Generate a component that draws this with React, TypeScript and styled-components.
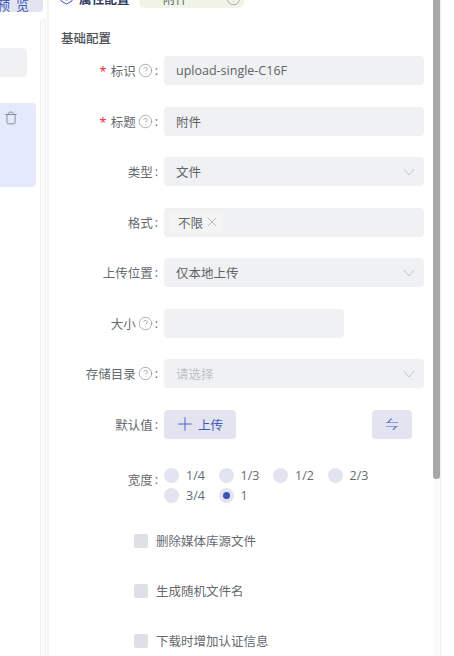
import React from "react";
import styled, { createGlobalStyle } from "styled-components";
import { CircleHelp, Plus, Trash, X } from "lucide-react";

const Global = createGlobalStyle`
  html, body { margin: 0; padding: 0; background: #fff; }
  body { font-family: "Open Sans", "Noto Sans CJK SC", sans-serif; font-size: 12.5px; color: #606266; }
`;

const Page = styled.div`
  position: relative;
  display: flex;
  width: 454px;
  height: 656px;
  overflow: hidden;
  background: #fff;
`;

const LeftPanel = styled.aside`
  position: relative;
  flex: 0 0 47px;
  display: flex;
  flex-direction: column;
  align-items: flex-start;
  border-right: 2px solid #f3f3f4;
  box-sizing: content-box;
`;

const PreviewButton = styled.div`
  width: 43px;
  height: 12px;
  background: #e2e5ef;
  border-radius: 0 0 4px 0;
  color: #4457bd;
  font-size: 13px;
  line-height: 10px;
  overflow: hidden;
  display: flex;
  justify-content: flex-end;
  padding: 0 8px 2px 0;
  box-sizing: border-box;
  align-items: flex-end;
  letter-spacing: 6px;
  white-space: nowrap;
`;

const LeftInput = styled.div`
  width: 27px;
  height: 29px;
  margin-top: 36px;
  background: #f0f1f3;
  border-radius: 0 4px 4px 0;
`;

const LeftCard = styled.div`
  width: 36px;
  height: 84px;
  margin-top: 26px;
  background: #e4e9fb;
  border-radius: 0 4px 4px 0;
  display: flex;
  justify-content: flex-end;
  padding: 8px 18px 0 0;
  box-sizing: border-box;
  color: #70747c;
`;

const LeftTrack = styled.div`
  position: absolute;
  left: 40px;
  top: 19px;
  bottom: 0;
  width: 6px;
  background: #fbfbfb;
  border: 1px solid #f3f3f4;
  border-bottom: none;
  border-radius: 4px 4px 0 0;
  box-sizing: border-box;
`;

const RightPanel = styled.main`
  flex: 0 0 372px;
  padding-left: 11px;
  box-sizing: border-box;
`;

const Header = styled.header`
  display: flex;
  align-items: center;
  height: 20px;
  margin-top: -12px;
`;

const HeaderTitle = styled.span`
  margin-left: 6px;
  font-size: 12.5px;
  font-weight: 700;
  color: #2f3a5f;
  letter-spacing: 0.2px;
`;

const TypeTag = styled.div`
  margin-left: 9px;
  width: 105px;
  height: 20px;
  background: #eef5e6;
  border-radius: 6px;
  display: flex;
  align-items: center;
  justify-content: space-between;
  padding: 0 3px 0 24px;
  box-sizing: border-box;
  color: #606266;
`;

const SectionTitle = styled.h2`
  margin: 23px 0 9px 1px;
  font-size: 12.5px;
  line-height: 16px;
  font-weight: 500;
  color: #4f5258;
`;

const Row = styled.div`
  display: grid;
  grid-template-columns: 98px 260px;
  column-gap: 6px;
  align-items: center;
  min-height: 29px;
  margin-bottom: 21.5px;
`;

const Label = styled.label`
  display: flex;
  align-items: center;
  justify-content: flex-end;
  gap: 2px;
  color: #666a70;
  white-space: nowrap;
`;

const Required = styled.span`
  color: #f5222d;
  margin-right: 1px;
`;

const HelpIcon = styled(CircleHelp)`
  color: #8a8d93;
`;

const Field = styled.div<{ $width?: number }>`
  width: ${(p) => p.$width ?? 260}px;
  height: 29px;
  background: #f0f1f3;
  border-radius: 4px;
  display: flex;
  align-items: center;
  justify-content: space-between;
  padding: 0 12px;
  box-sizing: border-box;
  color: #606266;
`;

const Placeholder = styled.span`
  color: #bfc2c7;
`;

const ChevronSvg = styled.svg`
  margin-right: -3px;
  stroke: #c0c4cc;
  fill: none;
`;

const Chevron = () => (
  <ChevronSvg width="12" height="8" viewBox="0 0 12 8" strokeWidth="1">
    <path d="M0.8 1 L6 7 L11.2 1" />
  </ChevronSvg>
);

const Chip = styled.span`
  height: 19px;
  margin-left: -6px;
  padding: 0 2px 0 8px;
  display: inline-flex;
  align-items: center;
  gap: 1px;
  border-radius: 3px;
  background: #f4f4f5;
`;

const ChipClose = styled(X)`
  color: #909399;
`;

const Actions = styled.div`
  display: flex;
  justify-content: space-between;
  width: 248px;
`;

const UploadButton = styled.button`
  width: 72px;
  height: 29px;
  border: none;
  border-radius: 4px;
  background: #e2e5ef;
  color: #4457bd;
  font: inherit;
  display: flex;
  align-items: center;
  justify-content: center;
  gap: 2px;
  padding: 0 3px 0 0;
`;

const SwapButton = styled(UploadButton)`
  width: 40px;
  padding: 0;
`;

const WidthRow = styled(Row)`
  align-items: start;
  margin-top: 28px;
  margin-bottom: 27px;
`;

const WidthLabel = styled(Label)`
  margin-top: 3px;
`;

const RadioGroup = styled.div`
  display: flex;
  flex-wrap: wrap;
  width: 230px;
  row-gap: 3px;
`;

const RadioItem = styled.span`
  flex: 0 0 54.5px;
  height: 17px;
  display: flex;
  align-items: center;
  gap: 7px;
  color: #666a70;
`;

const RadioDot = styled.span<{ $checked?: boolean }>`
  width: 15px;
  height: 15px;
  border-radius: 50%;
  background: #e2e5ef;
  display: flex;
  align-items: center;
  justify-content: center;
  flex: none;
  &::after {
    content: "";
    display: ${(p) => (p.$checked ? "block" : "none")};
    width: 7px;
    height: 7px;
    border-radius: 50%;
    background: #3f51b5;
  }
`;

const CheckRow = styled.div`
  display: flex;
  align-items: center;
  gap: 8px;
  height: 20px;
  margin: 0 0 30px 74px;
  color: #666a70;
`;

const CheckBox = styled.span`
  width: 14px;
  height: 14px;
  border-radius: 2px;
  background: #dde1e6;
  flex: none;
`;

const ScrollTrack = styled.div`
  position: absolute;
  left: 433px;
  top: 0;
  bottom: 0;
  width: 8px;
  background: #fbfbfb;
  border-right: 1px solid #f0f0f0;
  box-sizing: border-box;
`;

const ScrollThumb = styled.div`
  width: 7px;
  height: 479px;
  background: #a8a8a8;
  border-radius: 0 0 3px 3px;
`;

const GearIcon = () => (
  <svg width="13" height="14" viewBox="0 0 13 14" fill="none" stroke="#4457bd" strokeWidth="1">
    <path d="M6.5 1 L12 4 V10 L6.5 13 L1 10 V4 Z" />
    <circle cx="6.5" cy="7" r="2" />
  </svg>
);

const SwapIcon = () => (
  <svg width="12" height="12" viewBox="0 0 12 12" fill="none" strokeWidth="1.1">
    <path d="M0 4.5 H12 M0 8.5 H12" stroke="#8f9be0" />
    <path d="M2 4.5 L5.5 0.5 M10 8.5 L7 12" stroke="#4457bd" />
  </svg>
);

type FieldRowProps = { label: string; required?: boolean; help?: boolean; children: React.ReactNode };

const FormRow = ({ label, required, help, children }: FieldRowProps) => (
  <Row>
    <Label>
      <span>
        {required && <Required>*</Required>} {label}
      </span>
      {help && <HelpIcon size={15} strokeWidth={1.1} />}
      <span>:</span>
    </Label>
    {children}
  </Row>
);

const widths = ["1/4", "1/3", "1/2", "2/3", "3/4", "1"];
const checks = ["删除媒体库源文件", "生成随机文件名", "下载时增加认证信息"];

export default function App() {
  return (
    <Page>
      <Global />
      <LeftPanel>
        <PreviewButton>预览</PreviewButton>
        <LeftInput />
        <LeftCard>
          <Trash size={14} strokeWidth={1.3} />
        </LeftCard>
        <LeftTrack />
      </LeftPanel>
      <RightPanel>
        <Header>
          <GearIcon />
          <HeaderTitle>属性配置</HeaderTitle>
          <TypeTag>
            <span>附件</span>
            <HelpIcon size={15} strokeWidth={1.1} />
          </TypeTag>
        </Header>
        <SectionTitle>基础配置</SectionTitle>
        <FormRow label="标识" required help>
          <Field>upload-single-C16F</Field>
        </FormRow>
        <FormRow label="标题" required help>
          <Field>附件</Field>
        </FormRow>
        <FormRow label="类型">
          <Field>
            文件
            <Chevron />
          </Field>
        </FormRow>
        <FormRow label="格式">
          <Field>
            <Chip>
              不限
              <ChipClose size={16} strokeWidth={0.9} />
            </Chip>
          </Field>
        </FormRow>
        <FormRow label="上传位置">
          <Field>
            仅本地上传
            <Chevron />
          </Field>
        </FormRow>
        <FormRow label="大小" help>
          <Field $width={180} />
        </FormRow>
        <FormRow label="存储目录" help>
          <Field>
            <Placeholder>请选择</Placeholder>
            <Chevron />
          </Field>
        </FormRow>
        <FormRow label="默认值">
          <Actions>
            <UploadButton>
              <Plus size={22} strokeWidth={1} />
              上传
            </UploadButton>
            <SwapButton aria-label="切换">
              <SwapIcon />
            </SwapButton>
          </Actions>
        </FormRow>
        <WidthRow>
          <WidthLabel>
            <span>宽度</span>
            <span>:</span>
          </WidthLabel>
          <RadioGroup>
            {widths.map((w) => (
              <RadioItem key={w}>
                <RadioDot $checked={w === "1"} />
                {w}
              </RadioItem>
            ))}
          </RadioGroup>
        </WidthRow>
        {checks.map((c) => (
          <CheckRow key={c}>
            <CheckBox />
            {c}
          </CheckRow>
        ))}
      </RightPanel>
      <ScrollTrack>
        <ScrollThumb />
      </ScrollTrack>
    </Page>
  );
}
